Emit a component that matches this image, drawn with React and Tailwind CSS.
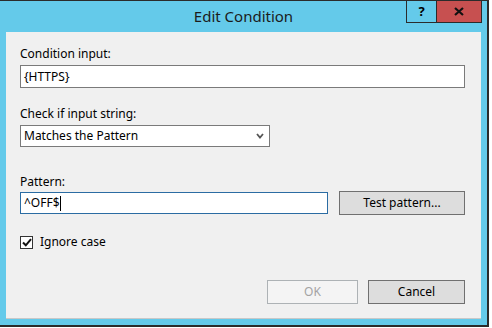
import React from 'react';

function Button({ children, disabled, className = '' }) {
    return (
        <div
            className={
                'flex items-center justify-center h-[24px] border text-[12px] ' +
                (disabled
                    ? 'bg-[#f4f4f4] border-[#adb2b5] text-[#a3a3a3] '
                    : 'bg-[#dddddd] border-[#707070] text-black ') +
                className
            }
        >
            {children}
        </div>
    );
}

export default function App() {
    return (
        <div className="w-[492px] h-[328px] bg-white" style={{ fontFamily: '"Noto Sans", "Open Sans", sans-serif' }}>
            <div className="w-[489px] h-[327px] flex flex-col bg-[#64caea] border-t border-r-2 border-b-2 border-[#2b2b2b]">
                {/* title bar */}
                <div className="h-[31px] grid grid-cols-[1fr_auto_1fr]">
                    <div />
                    <div className="pt-[5px] text-[15px] text-[#1b1b1b] leading-[20px]">Edit Condition</div>
                    <div className="flex justify-end items-start pr-[5px]">
                        <div className="w-[30px] h-[22px] flex items-center justify-center border-l border-b border-[#2b2b2b] text-[13px] font-bold text-black leading-none">
                            ?
                        </div>
                        <div className="w-[46px] h-[22px] flex items-center justify-center bg-[#c75050] border-l border-r border-b border-[#2b2b2b]">
                            <svg width="10" height="9" viewBox="0 0 10 9">
                                <path d="M1 1 L9 8 M9 1 L1 8" stroke="#111" strokeWidth="2.2" />
                            </svg>
                        </div>
                    </div>
                </div>

                {/* content */}
                <div className="mx-[6px] h-[287px] bg-[#f0f0f0] border-b border-[#c8c8c8] flex flex-col pl-[14px] pr-[16px] text-[12px] text-black leading-[16px]">
                    <div className="mt-[14px]">Condition input:</div>
                    <div className="mt-[3px] h-[23px] bg-white border border-[#7a7a7a] flex items-center pl-[3px]">{'{HTTPS}'}</div>

                    <div className="mt-[18px]">Check if input string:</div>
                    <div className="mt-[3px] w-[250px] h-[22px] bg-white border border-[#7a7a7a] flex items-center justify-between pl-[3px] pr-[5px]">
                        <span>Matches the Pattern</span>
                        <svg width="8" height="6" viewBox="0 0 8 6">
                            <path d="M1 1 L4 4.5 L7 1" stroke="#555" strokeWidth="1.8" fill="none" />
                        </svg>
                    </div>

                    <div className="mt-[27px]">Pattern:</div>
                    <div className="mt-[1px] flex items-center">
                        <div className="w-[308px] h-[22px] bg-white border border-[#2b6ca3] flex items-center pl-[3px]">
                            <span>^OFF$</span>
                            <span className="w-px h-[15px] bg-black" />
                        </div>
                        <Button className="ml-[11px] w-[126px]">Test pattern...</Button>
                    </div>

                    <div className="mt-[19px] flex items-center">
                        <div className="w-[13px] h-[13px] border border-[#333] bg-white flex items-center justify-center">
                            <svg width="10" height="9" viewBox="0 0 10 9">
                                <path d="M1 4.5 L3.8 7.3 L9 1.2" stroke="#111" strokeWidth="2" fill="none" />
                            </svg>
                        </div>
                        <span className="ml-[7px]">Ignore case</span>
                    </div>

                    <div className="mt-[30px] flex justify-end">
                        <Button disabled className="w-[91px]">OK</Button>
                        <Button className="ml-[10px] w-[97px]">Cancel</Button>
                    </div>
                </div>
            </div>
        </div>
    );
}
